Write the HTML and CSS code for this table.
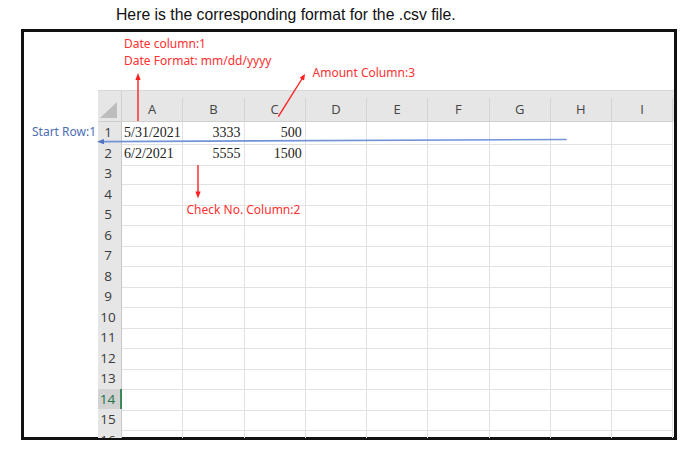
FILE: index.html
```html
<!DOCTYPE html>
<html>
<head>
<meta charset="utf-8">
<link rel="stylesheet" href="styles.css">
</head>
<body>
<p class="title">Here is the corresponding format for the .csv file.</p>
<div class="frame">
  <div class="sheet">
    <div class="row head">
      <div class="corner"><span class="tri"></span></div>
      <div class="ch">A</div><div class="ch">B</div><div class="ch">C</div><div class="ch">D</div><div class="ch">E</div><div class="ch">F</div><div class="ch">G</div><div class="ch">H</div><div class="ch">I</div>
    </div>
    <div class="row"><div class="rh">1</div><div class="c">5/31/2021</div><div class="c num">3333</div><div class="c num">500</div><div class="c"></div><div class="c"></div><div class="c"></div><div class="c"></div><div class="c"></div><div class="c"></div></div>
    <div class="row"><div class="rh">2</div><div class="c">6/2/2021</div><div class="c num">5555</div><div class="c num">1500</div><div class="c"></div><div class="c"></div><div class="c"></div><div class="c"></div><div class="c"></div><div class="c"></div></div>
    <div class="row"><div class="rh">3</div><div class="c"></div><div class="c"></div><div class="c"></div><div class="c"></div><div class="c"></div><div class="c"></div><div class="c"></div><div class="c"></div><div class="c"></div></div>
    <div class="row"><div class="rh">4</div><div class="c"></div><div class="c"></div><div class="c"></div><div class="c"></div><div class="c"></div><div class="c"></div><div class="c"></div><div class="c"></div><div class="c"></div></div>
    <div class="row"><div class="rh">5</div><div class="c"></div><div class="c"></div><div class="c"></div><div class="c"></div><div class="c"></div><div class="c"></div><div class="c"></div><div class="c"></div><div class="c"></div></div>
    <div class="row"><div class="rh">6</div><div class="c"></div><div class="c"></div><div class="c"></div><div class="c"></div><div class="c"></div><div class="c"></div><div class="c"></div><div class="c"></div><div class="c"></div></div>
    <div class="row"><div class="rh">7</div><div class="c"></div><div class="c"></div><div class="c"></div><div class="c"></div><div class="c"></div><div class="c"></div><div class="c"></div><div class="c"></div><div class="c"></div></div>
    <div class="row"><div class="rh">8</div><div class="c"></div><div class="c"></div><div class="c"></div><div class="c"></div><div class="c"></div><div class="c"></div><div class="c"></div><div class="c"></div><div class="c"></div></div>
    <div class="row"><div class="rh">9</div><div class="c"></div><div class="c"></div><div class="c"></div><div class="c"></div><div class="c"></div><div class="c"></div><div class="c"></div><div class="c"></div><div class="c"></div></div>
    <div class="row"><div class="rh">10</div><div class="c"></div><div class="c"></div><div class="c"></div><div class="c"></div><div class="c"></div><div class="c"></div><div class="c"></div><div class="c"></div><div class="c"></div></div>
    <div class="row"><div class="rh">11</div><div class="c"></div><div class="c"></div><div class="c"></div><div class="c"></div><div class="c"></div><div class="c"></div><div class="c"></div><div class="c"></div><div class="c"></div></div>
    <div class="row"><div class="rh">12</div><div class="c"></div><div class="c"></div><div class="c"></div><div class="c"></div><div class="c"></div><div class="c"></div><div class="c"></div><div class="c"></div><div class="c"></div></div>
    <div class="row"><div class="rh">13</div><div class="c"></div><div class="c"></div><div class="c"></div><div class="c"></div><div class="c"></div><div class="c"></div><div class="c"></div><div class="c"></div><div class="c"></div></div>
    <div class="row"><div class="rh sel">14</div><div class="c"></div><div class="c"></div><div class="c"></div><div class="c"></div><div class="c"></div><div class="c"></div><div class="c"></div><div class="c"></div><div class="c"></div></div>
    <div class="row"><div class="rh">15</div><div class="c"></div><div class="c"></div><div class="c"></div><div class="c"></div><div class="c"></div><div class="c"></div><div class="c"></div><div class="c"></div><div class="c"></div></div>
    <div class="row"><div class="rh">16</div><div class="c"></div><div class="c"></div><div class="c"></div><div class="c"></div><div class="c"></div><div class="c"></div><div class="c"></div><div class="c"></div><div class="c"></div></div>
  </div>
</div>

<svg class="arrows" width="700" height="455" viewBox="0 0 700 455">
  <g stroke="#ff1f1f" stroke-width="1.4" fill="none">
    <line x1="138" y1="121" x2="138" y2="78"/>
    <line x1="278.3" y1="116.7" x2="302.5" y2="78"/>
    <line x1="198" y1="165" x2="198" y2="192"/>
  </g>
  <g fill="#ff1f1f">
    <polygon points="138,73 135.4,80 140.6,80"/>
    <polygon points="305,74 304.1,80.6 299.6,77.8"/>
    <polygon points="198,198.5 195.4,191.5 200.6,191.5"/>
  </g>
  <line x1="566.7" y1="139.5" x2="102" y2="141.6" stroke="#7393d8" stroke-width="1.6"/>
  <polygon points="97,141.8 104,139.1 104,144.3" fill="#4f72c4"/>
</svg>
<span class="note red n1">Date column:1</span>
<span class="note red n2">Date Format: mm/dd/yyyy</span>
<span class="note red n3">Amount Column:3</span>
<span class="note red n4">Check No. Column:2</span>
<span class="note blue n5">Start Row:1</span>
</body>
</html>
```

FILE: styles.css
```css
html, body {
  margin: 0;
  padding: 0;
  background: #fff;
}
body {
  width: 700px;
  height: 455px;
  position: relative;
  overflow: hidden;
}
.title {
  margin: 0;
  box-sizing: border-box;
  height: 24px;
  padding: 5.5px 0 0 116px;
  font-family: "Liberation Sans", Arial, sans-serif;
  font-size: 15.75px;
  line-height: 18px;
  color: #111;
}
.frame {
  margin: 5px 0 0 21px;
  width: 656px;
  height: 411px;
  box-sizing: border-box;
  border: 3px solid #111;
  padding: 58px 0 0 74px;
}
.sheet {
  height: 347.5px;
  overflow: hidden;
  font-family: "Open Sans", "Noto Sans", sans-serif;
}
.row {
  display: grid;
  grid-template-columns: 24px repeat(9, 61.25px);
  height: 20.5px;
}
.row.head {
  height: 32px;
  background: #e6e6e6;
  border-top: 1px solid #d8d8d8;
  box-sizing: border-box;
  padding-top: 7px;
}
.corner {
  position: relative;
  border-right: 1px solid #cfcfcf;
  border-bottom: 1px solid #cfcfcf;
  margin-top: -7px;
}
.tri {
  position: absolute;
  right: 4px;
  bottom: 3px;
  width: 0;
  height: 0;
  border-left: 17px solid transparent;
  border-bottom: 16px solid #bdbdbd;
}
.ch {
  border-right: 1px solid #d3d3d3;
  border-bottom: 1px solid #cfcfcf;
  text-align: center;
  font-size: 13px;
  line-height: 22px;
  color: #444;
}
.rh {
  background: #e6e6e6;
  border-right: 1px solid #c8c8c8;
  border-bottom: 1px solid #d6d6d6;
  box-sizing: border-box;
  text-align: center;
  padding-right: 3px;
  font-size: 13.5px;
  line-height: 21px;
  color: #3a3a3a;
}
.rh.sel {
  background: #d2d2d2;
  color: #217346;
  border-right: 2px solid #3c8a5c;
}
.c {
  border-right: 1px solid #e2e2e2;
  border-bottom: 1px solid #e2e2e2;
  box-sizing: border-box;
  font-family: "Liberation Serif", "Times New Roman", serif;
  font-size: 14px;
  line-height: 22px;
  padding: 0 2px;
  color: #222;
  white-space: nowrap;
}
.c.num {
  text-align: right;
  padding-right: 3px;
}
.arrows {
  position: absolute;
  left: 0;
  top: 0;
  pointer-events: none;
}
.note {
  position: absolute;
  font-family: "Noto Sans", "Open Sans", sans-serif;
  font-size: 12px;
  line-height: 16px;
  white-space: nowrap;
}
.red { color: #ff3030; }
.blue { color: #4d6db5; }
.n1 { left: 124px; top: 36px; }
.n2 { left: 124px; top: 52.5px; }
.n3 { left: 312.5px; top: 65px; }
.n4 { left: 186.5px; top: 202px; }
.n5 { left: 32px; top: 123.5px; }
```
